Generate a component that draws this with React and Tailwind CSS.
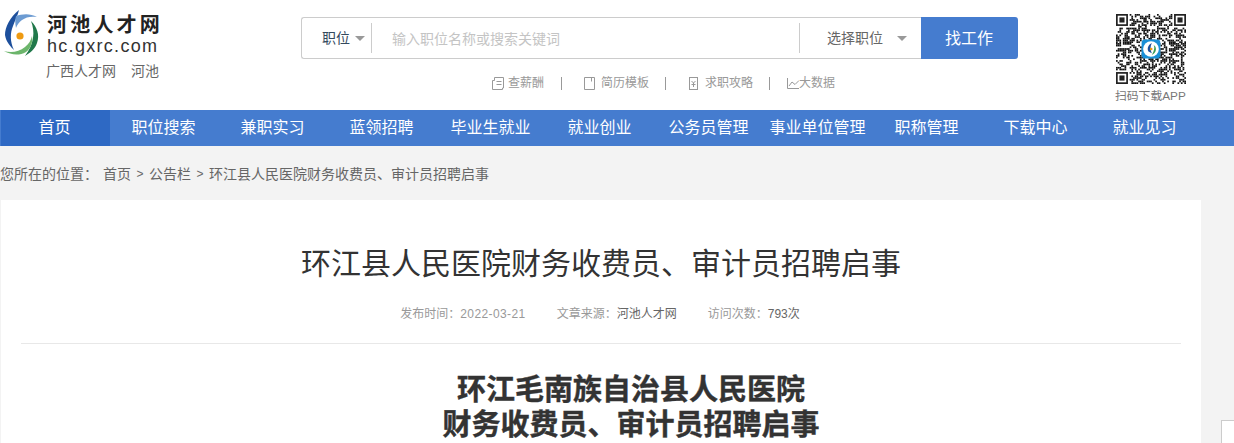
import React from "react";

const FONT = "font-['Liberation_Sans','Noto_Sans_CJK_SC',sans-serif]";

function Logo() {
  return (
    <svg width="36" height="48" viewBox="0 0 36 48" className="shrink-0">
      <path d="M15 1C6 8 1 18 1 26c1 7 6 12 9 15C6 33 6 24 9 17c2-6 5-11 6-16z" fill="#1d4f9c" />
      <path d="M12 7c6-2 14-3 21 1-6-1-11 0-15 3-3 2-5 5-6 8-1-5-1-9 0-12z" fill="#6c9bd2" />
      <path d="M27 12c6 6 9 14 6 22-2 6-7 10-12 13 4-6 7-11 8-18 1-6 0-12-2-17z" fill="#20784a" />
      <path d="M0 42c7 2 15 1 21-4 4-3 6-7 7-11 1 6-1 12-6 16-7 4-15 3-22-1z" fill="#6cb56b" />
      <circle cx="16" cy="27" r="3.6" fill="#ee9a12" />
    </svg>
  );
}

function Caret({ color = "#999" }) {
  return <span className="inline-block h-0 w-0 border-x-[5px] border-t-[5px] border-x-transparent" style={{ borderTopColor: color }} />;
}

function Qr() {
  const n = 41;
  const cells = [];
  let s = 20220321;
  const inFinder = (x, y) => (x < 8 && y < 8) || (x >= n - 8 && y < 8) || (x < 8 && y >= n - 8);
  for (let y = 0; y < n; y++) {
    for (let x = 0; x < n; x++) {
      s = (s * 1103515245 + 12345) & 0x7fffffff;
      if (!inFinder(x, y) && (s >> 16) % 100 < 52) cells.push(<rect key={x + "-" + y} x={x} y={y} width="1" height="1" fill="#111" />);
    }
  }
  const finder = (x, y) => (
    <g key={x + "f" + y}>
      <rect x={x + 0.5} y={y + 0.5} width="6" height="6" fill="none" stroke="#222" strokeWidth="1" />
      <rect x={x + 2} y={y + 2} width="3" height="3" fill="#222" />
    </g>
  );
  return (
    <svg width="70" height="70" viewBox="0 0 41 41" className="block">
      {cells}
      {finder(0, 0)}
      {finder(34, 0)}
      {finder(0, 34)}
      <rect x="15" y="15" width="11" height="11" rx="2" fill="#1a8fd6" />
      <circle cx="20.5" cy="20.5" r="4.6" fill="#fff" />
      <path d="M21 17c-2 1-3 3-2 5l2 1c-1-2-1-4 0-6z" fill="#1d4f9c" />
      <path d="M21 24c2-1 3-3 2-5l-1-1c1 2 0 4-1 6z" fill="#3a9a57" />
      <circle cx="20.6" cy="20.5" r="0.8" fill="#ee9a12" />
    </svg>
  );
}

const stroke = { fill: "none", stroke: "#999", strokeWidth: 1 };

function Sep({ className }) {
  return <span className={`h-[13px] w-px bg-[#999] ${className}`} />;
}

const nav = ["首页", "职位搜索", "兼职实习", "蓝领招聘", "毕业生就业", "就业创业", "公务员管理", "事业单位管理", "职称管理", "下载中心", "就业见习"];

export default function App() {
  return (
    <div className={`${FONT} h-[443px] w-[1234px] overflow-hidden bg-[#f3f3f3] text-[#666]`}>
      <header className="flex h-[110px] bg-white">
        <div className="w-[301px] shrink-0 pl-[4px] pt-[9px]">
          <div className="flex gap-[7px]">
            <Logo />
            <div className="pt-[5px]">
              <div className="whitespace-nowrap text-[20px] font-bold leading-[22px] tracking-[3.200px] text-[#222]">河池人才网</div>
              <div className="whitespace-nowrap text-[18px] leading-[20px] tracking-[1.300px] text-[#333]">hc.gxrc.com</div>
            </div>
          </div>
          <div className="mt-[5px] flex gap-[15px] pl-[42px] text-[14px] leading-[18px] text-[#666]">
            <span>广西人才网</span>
            <span>河池</span>
          </div>
        </div>

        <div className="w-[717px] shrink-0 pt-[17px]">
          <div className="flex h-[42px]">
            <div className="flex h-full flex-1 items-center rounded-l-[3px] border border-r-0 border-[#ccc] bg-white">
              <div className="flex h-[30px] w-[70px] items-center gap-[5px] border-r border-[#ccc] pl-[20px] pt-[1px] text-[14px] text-[#34495e]">
                <span>职位</span>
                <Caret />
              </div>
              <div className="flex-1 pl-[20px] pt-[2px] text-[14px] text-[#c4c4c4]">输入职位名称或搜索关键词</div>
              <div className="flex h-[30px] w-[122px] items-center border-l border-[#ccc] pl-[27px] text-[14px] text-[#666]">
                <span>选择职位</span>
                <span className="ml-[14px] flex"><Caret /></span>
              </div>
            </div>
            <div className="flex h-full w-[97px] items-center justify-center rounded-r-[3px] bg-[#457ccf] pt-[1px] pr-[1px] text-[16px] text-white">找工作</div>
          </div>
          <div className="mt-[16px] flex h-[16px] items-center pl-[191px] text-[12px] text-[#999]">
            <svg width="12" height="14" viewBox="0 0 12 14" {...stroke}><path d="M2.500 1.500h9v10.500h-1v1.500h-10v-9h2z" /><path d="M4.500 5.500h5M4.500 8.500h5" /></svg>
            <span className="ml-[4px]">查薪酬</span>
            <Sep className="ml-[17px]" />
            <svg className="ml-[22px]" width="11" height="14" viewBox="0 0 11 14" {...stroke}><path d="M.500 1.500h10v12h-10zM7.500 1.500v4" /></svg>
            <span className="ml-[6px]">简历模板</span>
            <Sep className="ml-[16px]" />
            <svg className="ml-[23px]" width="9" height="14" viewBox="0 0 9 14" {...stroke}><rect x=".5" y="1.500" width="8" height="12" /><path d="M2.500 5l2 2 2-2M4.500 7v4M2.500 8.500h4" /></svg>
            <span className="ml-[7px]">求职攻略</span>
            <Sep className="ml-[16px]" />
            <svg className="ml-[17px]" width="12" height="14" viewBox="0 0 12 14" {...stroke}><path d="M.500 2v10.500h11.500M2 10l3-4 3 2.500 4-4" /></svg>
            <span>大数据</span>
          </div>
        </div>

        <div className="ml-[98px] w-[70px] shrink-0 pt-[14px]">
          <Qr />
          <div className="mt-[4px] -ml-px whitespace-nowrap text-[11.800px] leading-[16px] text-[#777]">扫码下载APP</div>
        </div>
      </header>

      <nav className="flex h-[36px] bg-[#457ccf] pl-px">
        {nav.map((t, i) => (
          <div key={t} className={`flex h-full w-[109px] shrink-0 items-center justify-center whitespace-nowrap pr-[2px] text-[16px] text-white ${i === 0 ? "bg-[#2e69c4]" : ""}`}>
            {t}
          </div>
        ))}
      </nav>

      <div className="flex h-[54px] items-center pt-[2px] whitespace-nowrap text-[14px] text-[#666]">
        <span>您所在的位置：</span>
        <span className="ml-[5px]">首页</span>
        <span className="mx-[5.500px] text-[12px]">&gt;</span>
        <span>公告栏</span>
        <span className="mx-[5.500px] text-[12px]">&gt;</span>
        <span>环江县人民医院财务收费员、审计员招聘启事</span>
      </div>

      <main className="ml-px h-[243px] w-[1200px] bg-white px-[20px]">
        <h1 className="pt-[46px] text-center text-[30px] font-normal leading-[36px] text-[#333]">环江县人民医院财务收费员、审计员招聘启事</h1>
        <div className="mt-[24px] flex justify-center whitespace-nowrap pr-[2px] text-[12px] leading-[16px] text-[#999]">
          <span>发布时间：<span className="tracking-[.4px]">2022-03-21</span></span>
          <span className="ml-[31px]">文章来源：<span className="text-[#666]">河池人才网</span></span>
          <span className="ml-[31px]">访问次数：<span className="text-[#666]">793次</span></span>
        </div>
        <div className="mt-[21px] h-px bg-[#e8e8e8]" />
        <div className="mt-[29px] pl-[60px] text-center text-[29px] font-bold leading-[35px] text-[#333] [-webkit-text-stroke:0.4px_#333]">
          <div>环江毛南族自治县人民医院</div>
          <div>财务收费员、审计员招聘启事</div>
        </div>
      </main>

      <div className="absolute left-[1221px] top-[420px] h-[23px] w-[13px] border-l border-t border-[#ccc] bg-white" />
    </div>
  );
}
